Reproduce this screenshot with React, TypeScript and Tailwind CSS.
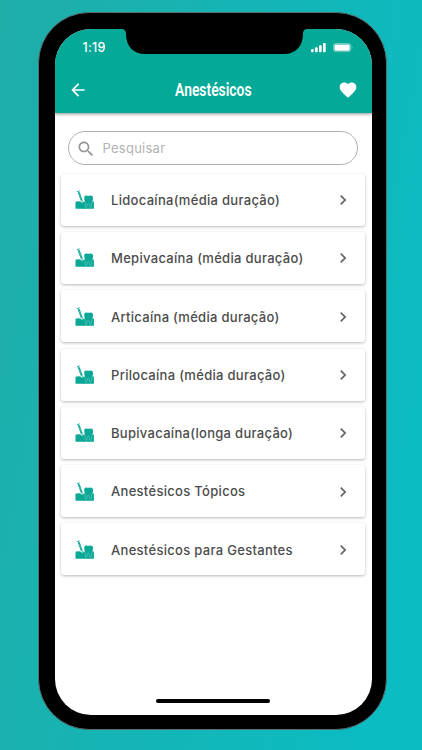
const items = [
  "Lidocaína(média duração)",
  "Mepivacaína (média duração)",
  "Articaína (média duração)",
  "Prilocaína (média duração)",
  "Bupivacaína(longa duração)",
  "Anestésicos Tópicos",
  "Anestésicos para Gestantes",
];

function Notch() {
  return (
    <svg className="absolute left-[66px] top-[-1px]" width="187" height="27" viewBox="0 0 187 27">
      <path d="M0 0H187V1C183.500 1 182 2.500 182 6C182 18 175 26 163 26H24C12 26 5 18 5 6C5 2.500 3.500 1 0 1Z" fill="#000" />
    </svg>
  );
}

function Signal() {
  return (
    <svg width="15" height="10" viewBox="0 0 15 10" fill="#fff">
      <rect x="0" y="6" width="2.700" height="3.200" rx="1.200" />
      <rect x="4" y="4.300" width="2.700" height="4.900" rx="1" />
      <rect x="8" y="2.200" width="2.700" height="7" rx="1" />
      <rect x="12" y="0" width="2.700" height="9.200" rx="1" />
    </svg>
  );
}

function Battery() {
  return (
    <svg width="20" height="10" viewBox="0 0 20 10">
      <rect x="0.500" y="0.500" width="17.200" height="8.200" rx="2" fill="none" stroke="#fff" strokeOpacity="0.4" />
      <rect x="1.500" y="1.500" width="15.200" height="6.200" rx="0.900" fill="#fff" />
      <path d="M18.600 3C20 3.600 20 5.600 18.600 6.200Z" fill="#fff" fillOpacity="0.4" />
    </svg>
  );
}

function ToothIcon() {
  return (
    <svg width="20" height="20" viewBox="0 0 20 20">
      <path d="M0.500 11.800Q3 10.700 5.500 11.600L7.500 13.200L8.800 11.600H9.500V18.700H0.500Z" fill="#08a796" />
      <path d="M9.200 7.500Q9.200 5.300 11.300 5.500Q13.500 6 15.500 5.500Q18.100 5.200 18.100 8Q17.900 10 17.300 11.500H18.900V18.700H8.500L9 11.700H10Q9.200 9.500 9.200 7.500Z" fill="#08a796" />
      <path d="M10.200 12V16.800Q10.700 18.500 11.600 17L12.600 13.600Q13.300 12.300 14 13.600L14.700 17Q15.700 18.500 16.300 16.500L16.900 12" fill="none" stroke="#6fcabf" strokeWidth="0.6" />
      <path d="M3.800 2.500L6.700 10.500" stroke="#08a796" strokeWidth="2" />
      <path d="M1.800 1.800L4.800 0.800M3.200 1.300L3.800 3M6.700 10L8.300 13.500" stroke="#08a796" strokeWidth="0.8" />
      <path d="M4.300 4L6.200 9" stroke="#8fd8cf" strokeWidth="0.400" />
    </svg>
  );
}

function Header() {
  return (
    <header className="relative z-10 h-[84px] shrink-0 bg-[#04a998] text-white shadow-[0_1px_3px_rgba(0,0,0,0.45)]">
      <Notch />
      <div className="flex h-[38px] items-center pl-7 pr-[19px] pt-px">
        <span className="text-[12.5px] font-medium tracking-[0.3px]">1:19</span>
        <div className="ml-auto flex items-center gap-[7px]">
          <Signal />
          <Battery />
        </div>
      </div>
      <div className="flex h-[46px] items-center justify-between pl-[13px] pr-[14px]">
        <svg width="20" height="20" viewBox="0 0 24 24" fill="#fff">
          <path d="M20 11H7.830l5.590-5.590L12 4l-8 8 8 8 1.410-1.410L7.830 13H20v-2z" />
        </svg>
        <h1 className="w-[104px] scale-x-[0.73] whitespace-nowrap text-center font-['Roboto'] text-[19px] font-semibold leading-6">
          Anestésicos
        </h1>
        <svg width="20" height="20" viewBox="0 0 24 24" fill="#fff">
          <path d="M12 21.350l-1.450-1.320C5.400 15.360 2 12.280 2 8.500 2 5.420 4.420 3 7.500 3c1.740 0 3.410.81 4.500 2.090C13.090 3.810 14.760 3 16.500 3 19.580 3 22 5.420 22 8.500c0 3.780-3.400 6.860-8.550 11.540L12 21.350z" />
        </svg>
      </div>
    </header>
  );
}

function SearchBox() {
  return (
    <div className="ml-[13px] mr-[14px] mt-[18px] flex h-[34px] shrink-0 items-center rounded-full border border-[#b0b0b0] pl-[7px] pt-[2px]">
      <svg width="20" height="20" viewBox="0 0 24 24" fill="#969696">
        <path d="M15.500 14h-.79l-.28-.27C15.410 12.590 16 11.110 16 9.500 16 5.910 13.090 3 9.500 3S3 5.910 3 9.500 5.910 16 9.500 16c1.610 0 3.090-.59 4.230-1.570l.27.28v.79l5 4.990L20.490 19l-4.990-5zm-6 0C7.010 14 5 11.990 5 9.500S7.010 5 9.500 5 14 7.010 14 9.500 11.990 14 9.500 14z" />
      </svg>
      <span className="ml-[7px] text-[13px] tracking-[0.25px] text-[#b2b2b2]">Pesquisar</span>
    </div>
  );
}

function Item({ label }: { label: string }) {
  return (
    <li className="flex h-[52px] items-center rounded-[3px] bg-white pl-[14px] pr-[12px] pt-px shadow-[0_1px_3px_rgba(0,0,0,0.28)]">
      <ToothIcon />
      <span className="ml-4 whitespace-nowrap pt-px text-[13px] font-medium tracking-[0.3px] text-[#4c4c4c]">{label}</span>
      <svg className="ml-auto" width="20" height="20" viewBox="0 0 24 24" fill="#646464">
        <path d="M10 6L8.590 7.410 13.170 12l-4.580 4.590L10 18l6-6z" />
      </svg>
    </li>
  );
}

export default function App() {
  return (
    <div className="flex h-[750px] w-[422px] items-start bg-[linear-gradient(100deg,#1fada8_0%,#0bbcc2_90%,#0bbcc2_100%)] pl-[38px] pt-[12px] font-['Inter',sans-serif]">
      <div className="h-[718px] w-[349px] rounded-[51px] border border-[#55706f] bg-black p-[15.500px]">
        <div className="relative flex h-[686px] w-[317px] flex-col overflow-hidden rounded-[36px] bg-white">
          <Header />
          <SearchBox />
          <ul className="mt-[9.200px] flex flex-col gap-[6.300px] pl-[6.500px] pr-[7px]">
            {items.map((label) => (
              <Item key={label} label={label} />
            ))}
          </ul>
          <div className="mx-auto mb-3 mt-auto h-1 w-[114px] rounded-full bg-black" />
        </div>
      </div>
    </div>
  );
}
